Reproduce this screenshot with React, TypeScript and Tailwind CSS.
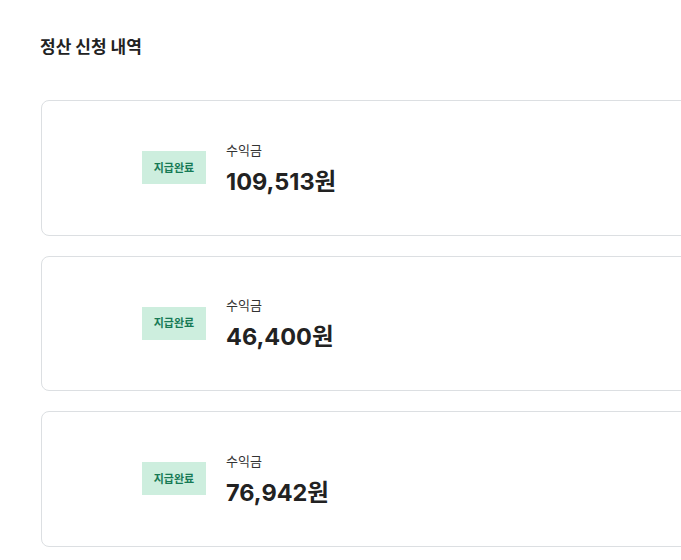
import React from "react";

const items = ["109,513원", "46,400원", "76,942원"];

export default function App() {
  return (
    <div
      className="w-full min-h-[560px] overflow-hidden bg-white text-[#222]"
      style={{ fontFamily: 'Inter, "Noto Sans CJK KR", sans-serif' }}
    >
      <div className="pl-[40px] pt-[36px]">
        <h1 className="text-[17px] font-bold leading-[22px] text-[#222]">정산 신청 내역</h1>
        <div className="mt-[42px] flex flex-col gap-[20px] pl-[1px]">
          {items.map((amt) => (
            <div
              key={amt}
              className="flex h-[135.5px] w-[720px] items-center rounded-[8px] border border-[#dcdfe2] pl-[100px]"
            >
              <div className="flex h-[33px] w-[64px] items-center justify-center bg-[#cdeede] text-[11px] font-bold text-[#177a55]">
                지급완료
              </div>
              <div className="ml-[20px] flex flex-col pt-[2px]">
                <span className="text-[13px] leading-[18px] text-[#333]">수익금</span>
                <span className="mt-[8px] text-[23.5px] font-bold leading-[30px] text-[#222]">{amt}</span>
              </div>
            </div>
          ))}
        </div>
      </div>
    </div>
  );
}
